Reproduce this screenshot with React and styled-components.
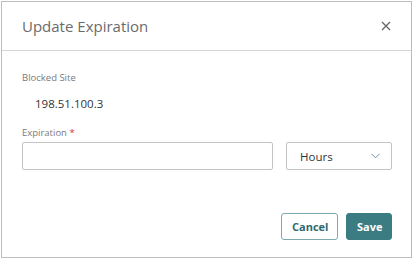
import React from 'react';
import styled, { createGlobalStyle } from 'styled-components';

const Global = createGlobalStyle`
  html, body { margin: 0; padding: 0; background: #fff; }
  body { font-family: "Open Sans", "Noto Sans", sans-serif; }
`;

const Dialog = styled.div`
  margin: 1px 0 0 1px;
  width: 411px;
  height: 257px;
  box-sizing: border-box;
  border: 1px solid #bcbcbc;
  background: #fff;
  display: flex;
  flex-direction: column;
`;

const Header = styled.div`
  height: 48px;
  display: flex;
  align-items: center;
  justify-content: space-between;
  padding: 0 19px 0 20px;
  border-bottom: 1px solid #d6d6d6;
`;

const Title = styled.h2`
  margin: 0;
  font-size: 15px;
  font-weight: 400;
  color: #6b6b6b;
`;

const Close = styled.button`
  border: none;
  background: none;
  padding: 0;
  width: 12px;
  height: 12px;
  display: flex;
  align-items: center;
  justify-content: center;
  cursor: pointer;
`;

const Body = styled.div`
  flex: 1;
  padding: 20px 19px 17px 20px;
  display: flex;
  flex-direction: column;
`;

const Label = styled.div`
  font-size: 9.5px;
  line-height: 14px;
  color: #7a7a7a;
  margin-bottom: ${p => p.$gap || 0}px;
`;

const Required = styled.span`
  color: #d32f2f;
`;

const Value = styled.div`
  font-size: 11.5px;
  line-height: 16px;
  color: #333;
  padding-left: 13px;
  margin: 11px 0 14px;
`;

const Row = styled.div`
  display: flex;
  gap: 13px;
`;

const Input = styled.input`
  width: 251px;
  height: 28px;
  box-sizing: border-box;
  border: 1px solid #c4c4c4;
  border-radius: 2px;
  padding: 0 8px;
  font: inherit;
  font-size: 12px;
  outline: none;
`;

const Select = styled.div`
  width: 106px;
  height: 28px;
  box-sizing: border-box;
  border: 1px solid #c4c4c4;
  border-radius: 2px;
  display: flex;
  align-items: center;
  justify-content: space-between;
  padding: 0 11px 0 13px;
  font-size: 11.5px;
  color: #333;
`;

const Footer = styled.div`
  margin-top: auto;
  display: flex;
  justify-content: flex-end;
  gap: 8px;
`;

const Button = styled.button`
  height: 27px;
  box-sizing: border-box;
  padding: 0 10px;
  border-radius: 3px;
  font-family: inherit;
  font-size: 11px;
  font-weight: 700;
  cursor: pointer;
  border: 1px solid ${p => (p.$primary ? '#3b7b82' : '#7aa9ae')};
  background: ${p => (p.$primary ? '#3b7b82' : '#fff')};
  color: ${p => (p.$primary ? '#fff' : '#2f6a72')};
  width: ${p => p.$w}px;
`;

export default function App() {
  return (
    <>
      <Global />
      <Dialog>
        <Header>
          <Title>Update Expiration</Title>
          <Close aria-label="Close">
            <svg width="10" height="10" viewBox="0 0 10 10">
              <path d="M1 1 L9 9 M9 1 L1 9" stroke="#666" strokeWidth="1.3" fill="none" />
            </svg>
          </Close>
        </Header>
        <Body>
          <Label>Blocked Site</Label>
          <Value>198.51.100.3</Value>
          <Label $gap={2}>
            Expiration <Required>*</Required>
          </Label>
          <Row>
            <Input />
            <Select>
              <span>Hours</span>
              <svg width="9" height="6" viewBox="0 0 9 6">
                <path d="M0.5 0.8 L4.5 4.8 L8.5 0.8" stroke="#6b93a6" strokeWidth="1" fill="none" />
              </svg>
            </Select>
          </Row>
          <Footer>
            <Button $w={57}>Cancel</Button>
            <Button $primary $w={46}>Save</Button>
          </Footer>
        </Body>
      </Dialog>
    </>
  );
}
